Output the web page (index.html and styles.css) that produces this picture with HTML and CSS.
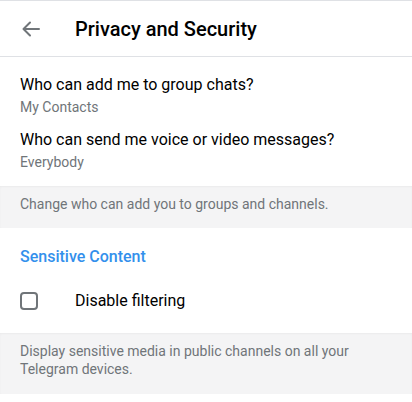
FILE: index.html
```html
<!DOCTYPE html>
<html lang="en">
<head>
    <meta charset="UTF-8">
    <title>Privacy and Security</title>
    <link rel="stylesheet" href="styles.css">
</head>
<body>
  <div class="topbar">
    <button class="back" aria-label="Back">
      <svg width="24" height="24" viewBox="0 0 24 24"><path d="M20 12H5M11 5.5L4.5 12 11 18.5" fill="none" stroke="#707579" stroke-width="2" stroke-linecap="round" stroke-linejoin="round"/></svg>
    </button>
    <h1 class="title">Privacy and Security</h1>
  </div>

  <div class="section section-first">
    <div class="row">
      <div class="row-title">Who can add me to group chats?</div>
      <div class="row-sub">My Contacts</div>
    </div>
    <div class="row">
      <div class="row-title">Who can send me voice or video messages?</div>
      <div class="row-sub">Everybody</div>
    </div>
  </div>
  <div class="caption">Change who can add you to groups and channels.</div>

  <div class="section">
    <div class="section-name">Sensitive Content</div>
    <label class="check-row">
      <span class="checkbox"></span>
      <span>Disable filtering</span>
    </label>
  </div>
  <div class="caption caption-last">Display sensitive media in public channels on all your Telegram devices.</div>
</body>
</html>
```

FILE: styles.css
```css
body { margin: 0; font-family: Roboto, "Noto Sans", sans-serif; background: #fff; color: #000; border-top: 1px solid #dfe1e5; }
.topbar { display: flex; align-items: center; height: 55px; border-bottom: 1px solid #dfe1e5; }
.back { width: 40px; height: 40px; margin-left: 11px; padding: 0; border: none; background: none; display: flex; align-items: center; justify-content: center; }
.title { margin: 0 0 0 24px; font-size: 20px; font-weight: 500; }
.section { padding: 13px 0 8px; }
.section-first { padding-bottom: 6px; }
.row { padding: 4px 20px 8px; }
.row-title { font-size: 16px; line-height: 22px; }
.row-sub { font-size: 14px; line-height: 20px; color: #707579; margin-top: 1px; }
.caption { background: #f4f4f5; color: #707579; font-size: 14px; line-height: 18px; padding: 9px 20px 15px; box-shadow: inset 0 1px 2px rgba(0,0,0,0.04); }
.caption-last { padding-bottom: 16px; }
.section-name { color: #3390ec; font-size: 16px; line-height: 18px; font-weight: 500; padding: 7px 20px 13px; }
.check-row { display: flex; align-items: center; gap: 37px; padding: 12px 20px 15px; font-size: 16px; }
.checkbox { width: 14px; height: 14px; border: 2px solid #707579; border-radius: 4px; }
```
